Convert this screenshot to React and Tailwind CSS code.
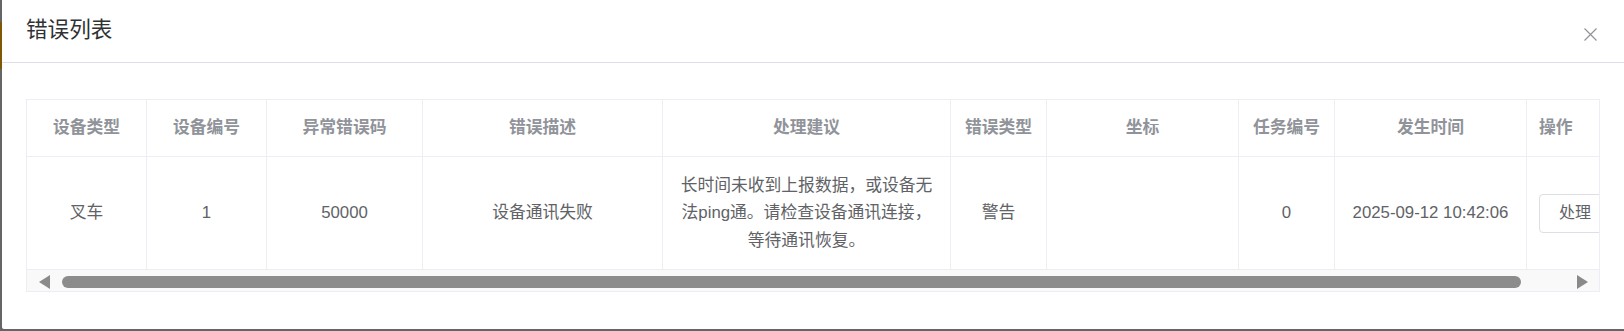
import React from "react";

const cols = [
  { key: "type", title: "设备类型", w: "w-[120px]" },
  { key: "no", title: "设备编号", w: "w-[120px]" },
  { key: "code", title: "异常错误码", w: "w-[156px]" },
  { key: "desc", title: "错误描述", w: "w-[240px]" },
  { key: "advice", title: "处理建议", w: "w-[288px]" },
  { key: "etype", title: "错误类型", w: "w-[96px]" },
  { key: "coord", title: "坐标", w: "w-[192px]" },
  { key: "task", title: "任务编号", w: "w-[96px]" },
  { key: "time", title: "发生时间", w: "w-[192px]" },
];

const row = {
  type: "叉车",
  no: "1",
  code: "50000",
  desc: "设备通讯失败",
  advice: "长时间未收到上报数据，或设备无法ping通。请检查设备通讯连接，等待通讯恢复。",
  etype: "警告",
  coord: "",
  task: "0",
  time: "2025-09-12 10:42:06",
};

export default function App() {
  return (
    <div
      className="w-[1624px] h-[331px] bg-[#656565] flex overflow-hidden"
      style={{ fontFamily: '"Liberation Sans", "Noto Sans CJK SC", sans-serif' }}
    >
      <div className="w-[2px] shrink-0 flex flex-col">
        <div className="h-[22px]" />
        <div className="h-[47px] bg-[#7f5705]" />
      </div>
      <div className="flex-1 flex flex-col min-w-0">
        <div className="h-[329px] bg-white rounded-bl-[2px] flex flex-col">
          <div className="h-[63px] shrink-0 border-b border-[#dcdfe6] flex justify-between pl-[24px] pr-[27px]">
            <div className="pt-[16px] text-[21.6px] leading-[28px] text-[#303133]">错误列表</div>
            <button className="mt-[28px] w-[13px] h-[13px] flex items-center justify-center">
              <svg width="13" height="13" viewBox="0 0 13 13">
                <path d="M0.5 0.5 L12.5 12.5 M12.5 0.5 L0.5 12.5" stroke="#909399" strokeWidth="1.2" fill="none" />
              </svg>
            </button>
          </div>
          <div className="pt-[36px] px-[24px]">
            <div className="border border-[#ebeef5] overflow-hidden">
              <div className="w-[1634px] flex flex-col">
                <div className="flex">
                  {cols.map((c) => (
                    <div
                      key={c.key}
                      className={`${c.w} shrink-0 h-[57px] border-r border-b border-[#ebeef5] flex items-center justify-center text-[16.8px] font-bold text-[#909399]`}
                    >
                      {c.title}
                    </div>
                  ))}
                  <div className="w-[134px] shrink-0 h-[57px] border-b border-[#ebeef5] flex items-center px-[12px] text-[16.8px] font-bold text-[#909399]">
                    操作
                  </div>
                </div>
                <div className="flex">
                  {cols.map((c) => (
                    <div
                      key={c.key}
                      className={`${c.w} shrink-0 h-[113px] border-r border-b border-[#ebeef5] flex items-center justify-center px-[12px] text-center text-[16.8px] leading-[27.6px] text-[#606266]`}
                    >
                      {row[c.key]}
                    </div>
                  ))}
                  <div className="w-[134px] shrink-0 h-[113px] border-b border-[#ebeef5] flex items-center px-[12px]">
                    <button className="h-[39px] px-[19px] border border-[#dcdfe6] rounded-[4px] bg-white text-[16px] text-[#606266] leading-none">
                      处理
                    </button>
                  </div>
                </div>
              </div>
              <div className="h-[21px] bg-[#f9f9f9] flex items-center pl-[12px] pr-[11px]">
                <svg width="11" height="14" viewBox="0 0 11 14" className="shrink-0 mt-[2px]">
                  <polygon points="11,0 11,14 0,7" fill="#8a8a8a" />
                </svg>
                <div className="ml-[12px] w-[1459px] h-[12px] rounded-full bg-[#8c8c8c] mt-[2px]" />
                <div className="flex-1" />
                <svg width="11" height="14" viewBox="0 0 11 14" className="shrink-0 mt-[2px]">
                  <polygon points="0,0 0,14 11,7" fill="#8a8a8a" />
                </svg>
              </div>
            </div>
          </div>
        </div>
      </div>
    </div>
  );
}
